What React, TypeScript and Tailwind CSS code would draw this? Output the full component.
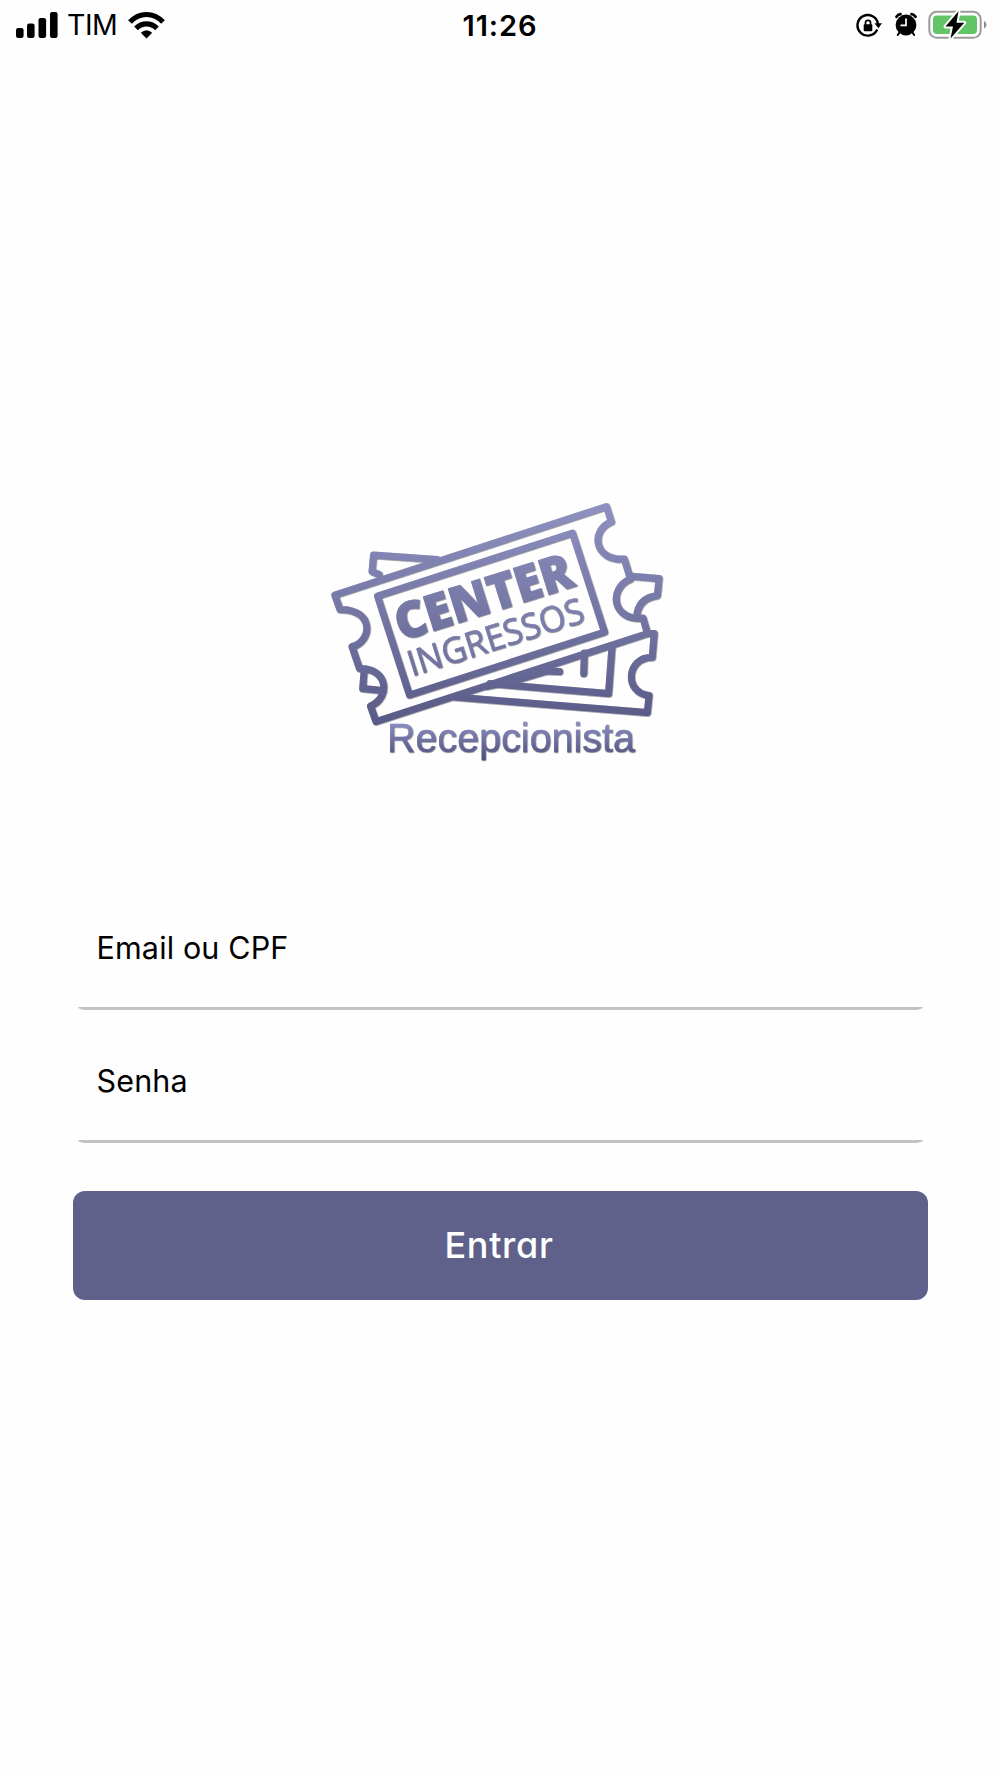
function SignalIcon() {
  return (
    <svg width="42" height="26" viewBox="0 0 42 26" fill="#000">
      <rect x="0" y="16" width="7.6" height="10" rx="2.2" />
      <rect x="11" y="11.5" width="7.6" height="14.5" rx="2.2" />
      <rect x="22.5" y="6" width="7.6" height="20" rx="2.2" />
      <rect x="34" y="0" width="7.6" height="26" rx="2.2" />
    </svg>
  );
}

function WifiIcon() {
  return (
    <svg width="38" height="28" viewBox="128 9.5 38 28" fill="none" stroke="#000" strokeWidth="5.2">
      <path d="M130 20.6Q137 13 146.500 13T163 20.600" />
      <path d="M136 26.800Q140.500 22.300 146.500 22.300T157 26.800" />
      <path d="M140.800 31.200Q146.500 26.200 152.200 31.200L146.500 37Z" fill="#000" stroke="none" />
    </svg>
  );
}

function LockRotationIcon() {
  return (
    <svg width="26" height="26" viewBox="856 12 26 26" fill="none" stroke="#000">
      <path d="M877.2 29.500A10.300 10.300 0 1 1 878 24" strokeWidth="2.400" />
      <path d="M874.500 23.200H882L878.400 28.200Z" fill="#000" stroke="none" />
      <rect x="863.700" y="24.300" width="8.600" height="7" rx="1" fill="#000" stroke="none" />
      <path d="M865.500 25V22.600Q865.500 20.300 868 20.300T870.500 22.600V25" strokeWidth="1.700" />
    </svg>
  );
}

function AlarmIcon() {
  return (
    <svg width="24" height="26" viewBox="894 12 24 26" fill="none" stroke="#000">
      <circle cx="906" cy="25" r="10.400" fill="#000" stroke="none" />
      <path d="M896.500 16.800Q898 14.500 900.500 14.200M915.500 16.800Q914 14.500 911.500 14.200" strokeWidth="2.800" strokeLinecap="round" />
      <path d="M899.500 32.500L897.800 35M912.500 32.500L914.200 35" strokeWidth="2" strokeLinecap="round" />
      <path d="M906 18.500V25.300H900.500" stroke="#fff" strokeWidth="1.700" />
    </svg>
  );
}

function BatteryIcon() {
  return (
    <svg width="60" height="32" viewBox="928 8.500 60 32">
      <rect x="929.300" y="11.300" width="51.400" height="26" rx="7.500" fill="none" stroke="#9c9c9c" strokeWidth="2" />
      <rect x="933" y="15" width="44" height="18.500" rx="4" fill="#62c466" />
      <path d="M984 20.300Q989 24.300 984 28.300Z" fill="#8e8e8e" />
      <path
        d="M958.500 10.800L945.500 26H953L950.500 38L964.300 22.300H956.500Z"
        fill="#000"
        stroke="#fff"
        strokeWidth="4"
        strokeLinejoin="round"
        paintOrder="stroke"
      />
    </svg>
  );
}

function Logo() {
  return (
    <svg
      className="block"
      role="img"
      aria-label="Center Ingressos Recepcionista"
      width="350"
      height="280"
      viewBox="325 490 350 280"
    >
      <defs>
        <linearGradient id="ticket" gradientUnits="userSpaceOnUse" x1="0" y1="500" x2="0" y2="725">
          <stop offset="0" stopColor="#9093c2" />
          <stop offset="1" stopColor="#585a86" />
        </linearGradient>
        <linearGradient id="caption" gradientUnits="userSpaceOnUse" x1="0" y1="722" x2="0" y2="758">
          <stop offset="0" stopColor="#8c8fc4" />
          <stop offset="1" stopColor="#50527f" />
        </linearGradient>
        <linearGradient id="lettering" gradientUnits="userSpaceOnUse" x1="42" y1="-134" x2="-26" y2="82">
          <stop offset="0" stopColor="#9093c2" />
          <stop offset="1" stopColor="#585a86" />
        </linearGradient>
        <filter id="edge" x="-5%" y="-5%" width="110%" height="110%">
          <feDropShadow dx="0.5" dy="0.6" stdDeviation="0.5" floodColor="#2c2c38" floodOpacity="0.7" />
        </filter>
      </defs>
      <g filter="url(#edge)">
        <g fill="none" stroke="url(#ticket)" strokeWidth="7" strokeLinejoin="round" strokeLinecap="round">
          <path d="M379 574.500L372 571.500L373.500 555L437 559.500" />
          <path d="M629.500 576L659 578.500L657.300 595.500Q638 598 636.500 617" />
          <path d="M364 672L362.700 688.500L383 690.500" />
          <path d="M646.500 633.500H654.200L652.200 657.300C626 657 624 693 649 695.500L647.300 712.500L455 697" />
          <path d="M612 646L608.500 693.500L490 683.500" />
          <path d="M584.300 653L583.700 673.500M536 670.500L559.500 671.500" />
          <path d="M334.800 595L606.500 506.500L611.300 521.800C590 530 594 561 624.300 559L630.500 579C608 588 612 621 643 618L647.500 633.500L376 721.500L370.500 706C391 697 388 668 359.500 668.500L352 646.500C372 642 375 609 340 609.500Z" />
          <path d="M377.500 596L572.500 533L604.500 632L409.500 695Z" />
        </g>
        <path d="M486 690L486 685L540 666L552 673L515 684Z" fill="url(#ticket)" />
        <g fill="url(#lettering)" style={{ fontFamily: '"Open Sans", "Noto Sans", sans-serif' }}>
          <text transform="translate(401 641) rotate(-17.500)" fontSize="49.500" fontWeight="800" textLength="184" lengthAdjust="spacingAndGlyphs" stroke="url(#lettering)" strokeWidth="1">
            CENTER
          </text>
          <text transform="translate(412 676.500) rotate(-17.500)" fontSize="35.500" textLength="183" lengthAdjust="spacingAndGlyphs" stroke="url(#lettering)" strokeWidth="0.500">
            INGRESSOS
          </text>
        </g>
        <text
          x="387"
          y="752"
          fontSize="41"
          textLength="248"
          lengthAdjust="spacingAndGlyphs"
          fill="url(#caption)"
          stroke="url(#caption)"
          strokeWidth="0.500"
          style={{ fontFamily: '"Liberation Sans", Arial, sans-serif' }}
        >
          Recepcionista
        </text>
      </g>
    </svg>
  );
}

function Field({ label }: { label: string }) {
  return (
    <div className="mx-[5px] flex h-[133px] flex-col">
      <div className="flex flex-1 items-center px-[19px] pt-[11px] text-[30.500px] tracking-[0.150px]">{label}</div>
      <div className="h-[3px] bg-[#c2c2c2] [border-radius:0_0_8px_8px/0_0_3px_3px]" />
    </div>
  );
}

export default function App() {
  return (
    <main className="flex h-[1778px] w-full flex-col bg-[#fefefe] font-['Inter',sans-serif] text-black">
      <header className="grid h-[50px] grid-cols-3 items-center pr-3 pl-4">
        <div className="flex items-center">
          <SignalIcon />
          <span className="ml-[9px] pt-px text-[28.500px] font-normal tracking-[-0.500px]">TIM</span>
          <span className="ml-[11px]">
            <WifiIcon />
          </span>
        </div>
        <time className="pt-px pr-[4px] text-center text-[29px] font-semibold tracking-[0.900px]">11:26</time>
        <div className="flex items-center justify-end">
          <LockRotationIcon />
          <span className="ml-3">
            <AlarmIcon />
          </span>
          <span className="ml-[10px]">
            <BatteryIcon />
          </span>
        </div>
      </header>
      <div className="mt-[440px] flex justify-center">
        <Logo />
      </div>
      <form className="mx-[72.500px] mt-[107px] flex flex-col">
        <Field label="Email ou CPF" />
        <Field label="Senha" />
        <button
          type="button"
          className="mt-[48px] h-[108.500px] rounded-[12px] bg-[#5f618a] pr-[2px] text-[36px] font-medium tracking-[0.700px] text-white [font-feature-settings:'cv11']"
        >
          Entrar
        </button>
      </form>
    </main>
  );
}
